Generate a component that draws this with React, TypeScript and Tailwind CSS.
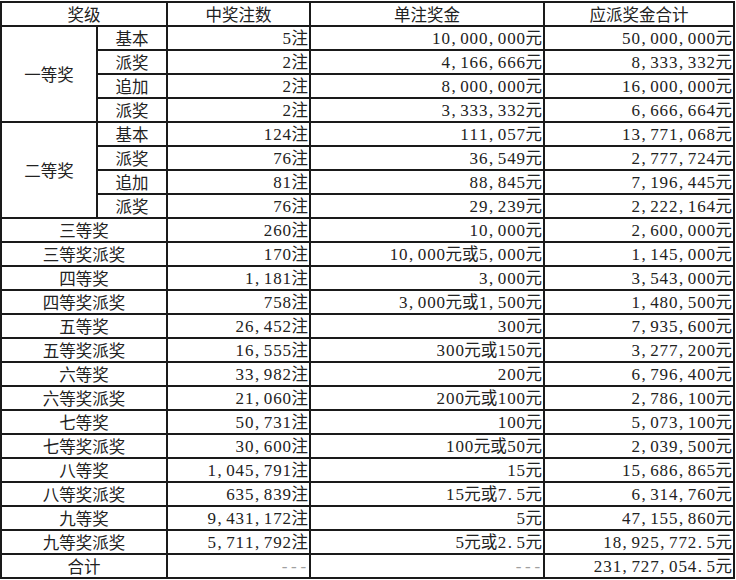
import React from 'react'

type Row = {
  group?: string
  span?: number
  sub?: string
  name?: string
  count: string
  unit: string
  total: string
}

const ROWS: Row[] = [
  { group: '一等奖', span: 4, sub: '基本', count: '5注', unit: '10,000,000元', total: '50,000,000元' },
  { sub: '派奖', count: '2注', unit: '4,166,666元', total: '8,333,332元' },
  { sub: '追加', count: '2注', unit: '8,000,000元', total: '16,000,000元' },
  { sub: '派奖', count: '2注', unit: '3,333,332元', total: '6,666,664元' },
  { group: '二等奖', span: 4, sub: '基本', count: '124注', unit: '111,057元', total: '13,771,068元' },
  { sub: '派奖', count: '76注', unit: '36,549元', total: '2,777,724元' },
  { sub: '追加', count: '81注', unit: '88,845元', total: '7,196,445元' },
  { sub: '派奖', count: '76注', unit: '29,239元', total: '2,222,164元' },
  { name: '三等奖', count: '260注', unit: '10,000元', total: '2,600,000元' },
  { name: '三等奖派奖', count: '170注', unit: '10,000元或5,000元', total: '1,145,000元' },
  { name: '四等奖', count: '1,181注', unit: '3,000元', total: '3,543,000元' },
  { name: '四等奖派奖', count: '758注', unit: '3,000元或1,500元', total: '1,480,500元' },
  { name: '五等奖', count: '26,452注', unit: '300元', total: '7,935,600元' },
  { name: '五等奖派奖', count: '16,555注', unit: '300元或150元', total: '3,277,200元' },
  { name: '六等奖', count: '33,982注', unit: '200元', total: '6,796,400元' },
  { name: '六等奖派奖', count: '21,060注', unit: '200元或100元', total: '2,786,100元' },
  { name: '七等奖', count: '50,731注', unit: '100元', total: '5,073,100元' },
  { name: '七等奖派奖', count: '30,600注', unit: '100元或50元', total: '2,039,500元' },
  { name: '八等奖', count: '1,045,791注', unit: '15元', total: '15,686,865元' },
  { name: '八等奖派奖', count: '635,839注', unit: '15元或7.5元', total: '6,314,760元' },
  { name: '九等奖', count: '9,431,172注', unit: '5元', total: '47,155,860元' },
  { name: '九等奖派奖', count: '5,711,792注', unit: '5元或2.5元', total: '18,925,772.5元' },
  { name: '合计', count: '---', unit: '---', total: '231,727,054.5元' },
]

// half-width cells for ascii chars, like the SimSun digits in the sheet
function Mixed({ text }: { text: string }) {
  return (
    <>
      {Array.from(text).map((ch, i) => {
        if (ch.charCodeAt(0) >= 128) return <span key={i}>{ch}</span>
        const punct = ch === ',' || ch === '.'
        return (
          <span
            key={i}
            className={`inline-block w-[9.4px] font-['Liberation_Serif',serif] text-[17px] ${punct ? 'text-left pl-px' : 'text-center'}`}
          >
            {ch}
          </span>
        )
      })}
    </>
  )
}

const cell = 'h-6 border-2 border-[#1a1a1a] p-0 leading-none whitespace-nowrap'

export default function App() {
  return (
    <div className="bg-white pt-px w-[736px] h-[580px]">
      <table className="table-fixed border-collapse text-[#222] text-[16.5px] font-['Noto_Sans_CJK_SC',sans-serif]">
        <colgroup>
          <col className="w-[96px]" />
          <col className="w-[70px]" />
          <col className="w-[143px]" />
          <col className="w-[234px]" />
          <col className="w-[190px]" />
        </colgroup>
        <thead>
          <tr>
            <th colSpan={2} className={`${cell} font-normal text-center`}>奖级</th>
            <th className={`${cell} font-normal text-center`}>中奖注数</th>
            <th className={`${cell} font-normal text-center`}>单注奖金</th>
            <th className={`${cell} font-normal text-center`}>应派奖金合计</th>
          </tr>
        </thead>
        <tbody>
          {ROWS.map((r, i) => (
            <tr key={i}>
              {r.group && (
                <td rowSpan={r.span} className={`${cell} text-center`}>
                  {r.group}
                </td>
              )}
              {r.sub && <td className={`${cell} text-center`}>{r.sub}</td>}
              {r.name && (
                <td colSpan={2} className={`${cell} text-center`}>
                  {r.name}
                </td>
              )}
              <td className={`${cell} text-right pr-px ${r.count === '---' ? 'text-[#a0a0a0]' : ''}`}>
                <Mixed text={r.count} />
              </td>
              <td className={`${cell} text-right pr-px ${r.unit === '---' ? 'text-[#a0a0a0]' : ''}`}>
                <Mixed text={r.unit} />
              </td>
              <td className={`${cell} text-right pr-px`}>
                <Mixed text={r.total} />
              </td>
            </tr>
          ))}
        </tbody>
      </table>
    </div>
  )
}
